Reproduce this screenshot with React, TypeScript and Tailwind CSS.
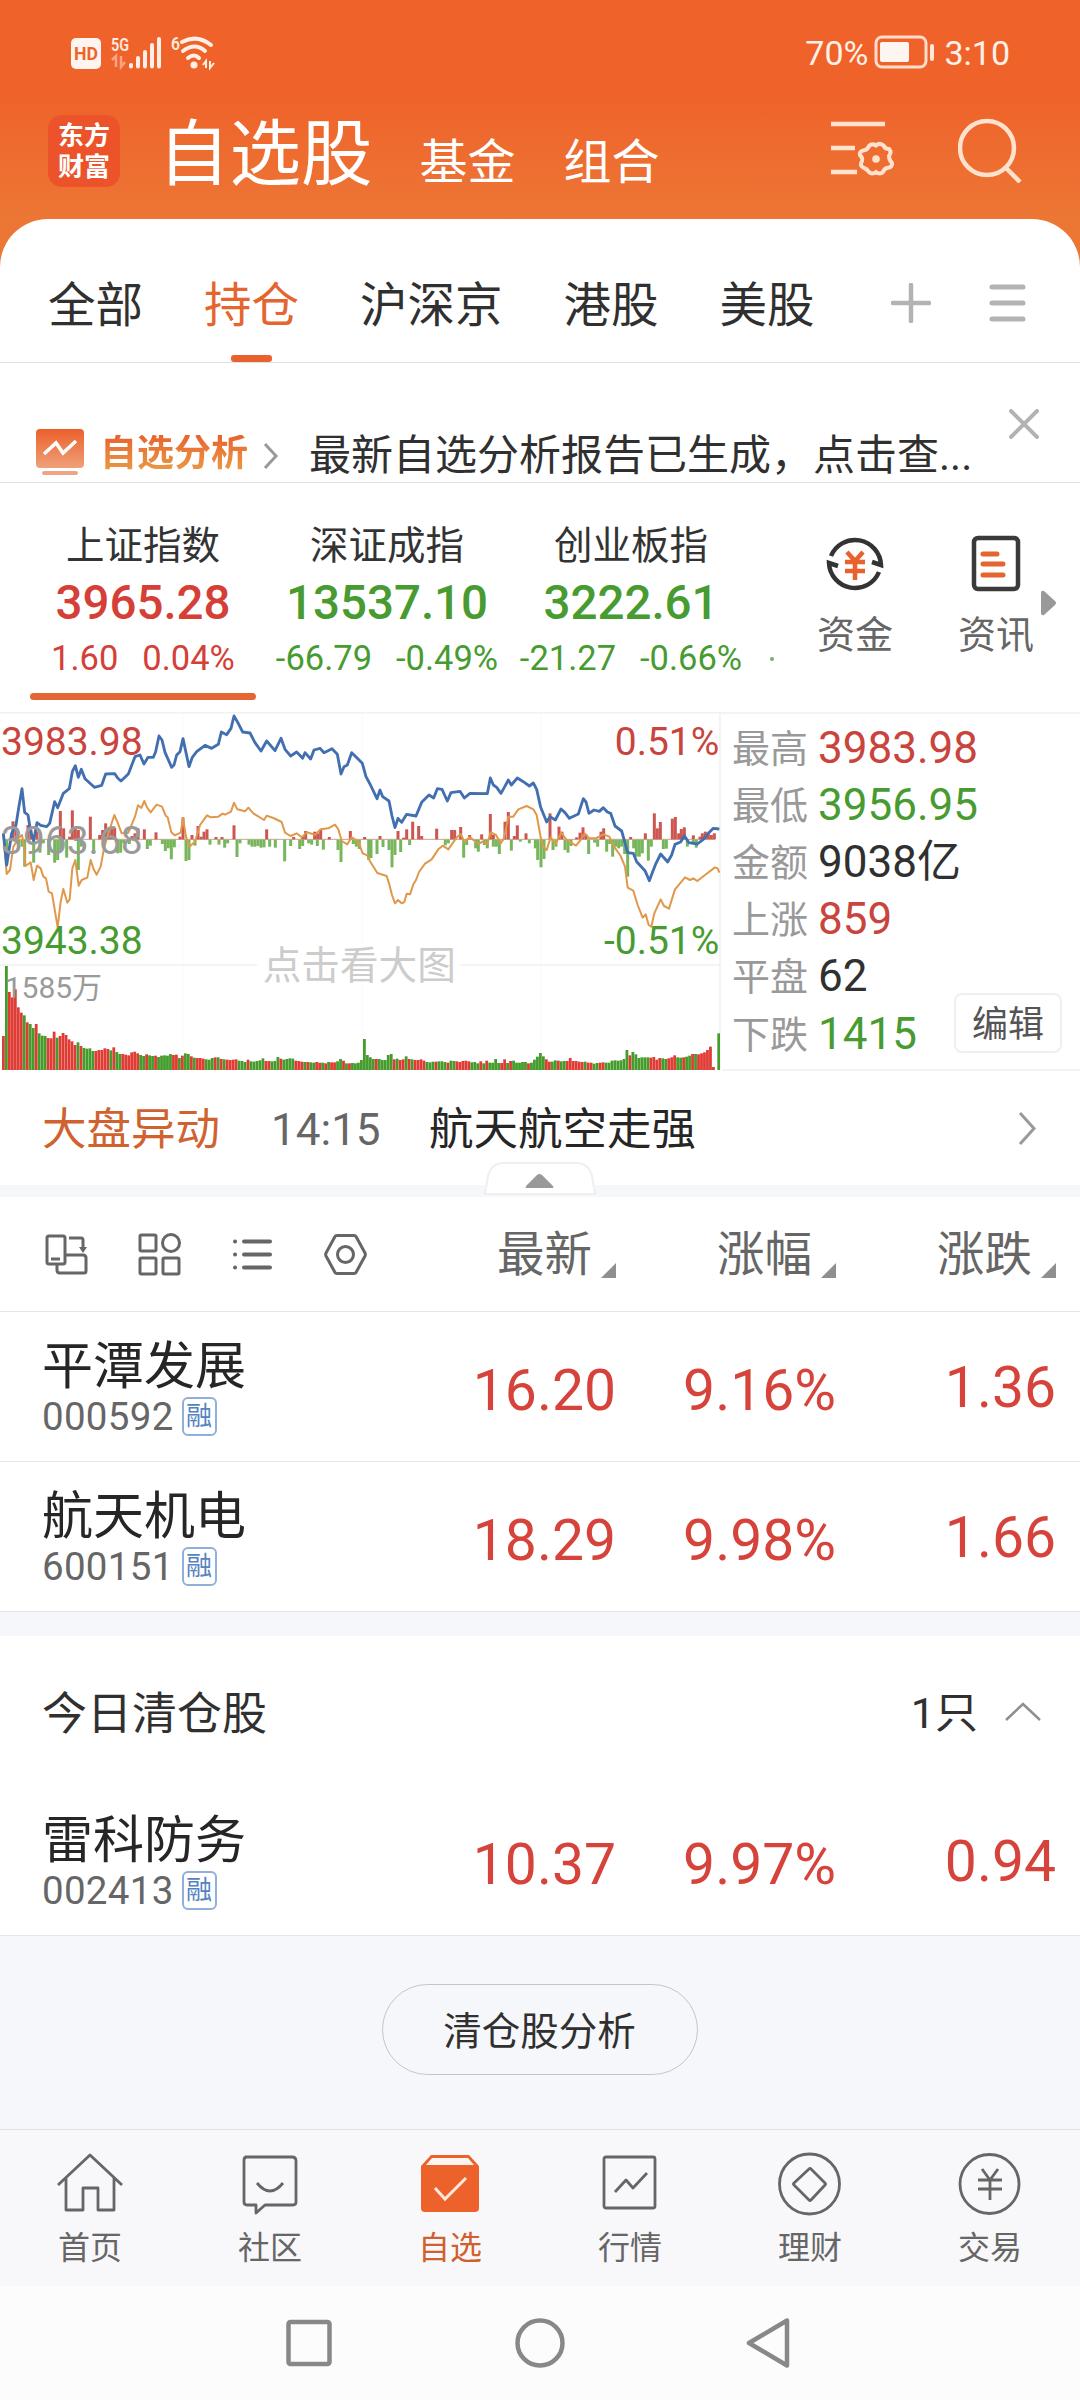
import React from 'react';

const GREEN = '#489b30';

// Chart coordinates use a 3x grid: 2160 x 1080 units for 720 x 360 px
const priceLine =
  '10,400 20,495 35,400 48,375 57,318 66,266 74,337 84,345 92,395 101,422 111,368 122,376 140,380 149,370 164,305 173,323 190,280 208,266 217,215 226,197 235,232 244,208 255,236 270,250 283,262 305,256 317,222 344,221 353,234 363,243 385,222 405,170 420,165 432,192 444,172 460,172 467,155 477,108 486,120 495,157 515,202 522,195 530,165 540,155 549,116 567,200 577,172 590,155 615,136 635,145 655,133 664,96 680,104 693,85 702,48 712,65 728,96 750,99 765,128 783,153 800,123 825,152 843,115 855,148 872,168 890,156 908,175 915,158 932,177 942,150 960,145 972,158 996,146 1012,163 1023,222 1032,200 1042,195 1055,158 1072,175 1087,190 1098,230 1110,252 1131,296 1140,270 1148,290 1167,303 1176,348 1185,383 1194,355 1205,367 1220,343 1248,348 1265,307 1287,285 1301,294 1312,266 1326,268 1342,303 1353,278 1380,274 1393,294 1410,280 1462,281 1471,234 1480,255 1490,262 1503,280 1513,262 1525,240 1534,255 1552,234 1570,245 1588,258 1600,249 1610,268 1622,322 1640,366 1650,350 1666,360 1683,327 1695,338 1708,355 1735,342 1750,296 1758,306 1767,340 1782,330 1798,334 1810,323 1822,336 1832,340 1845,378 1865,393 1878,440 1883,458 1900,460 1910,485 1935,512 1948,542 1958,515 1968,490 1982,462 2003,486 2015,465 2025,433 2042,426 2053,407 2067,428 2092,432 2110,418 2125,400 2140,385 2158,387';

const avgLine =
  '10,400 20,522 30,510 40,440 55,415 66,405 72,440 76,498 92,487 101,540 111,497 122,505 130,530 138,535 146,575 156,580 173,682 182,605 190,567 202,608 209,598 217,505 226,480 236,557 245,540 262,533 272,480 281,508 290,524 302,500 312,445 325,400 343,345 353,368 365,400 385,398 405,350 414,316 424,324 433,303 441,322 452,337 470,314 486,320 497,347 503,352 514,397 524,406 542,398 549,355 558,410 568,440 585,425 600,375 621,346 632,352 655,350 668,341 675,344 693,335 702,308 712,328 735,334 745,323 760,340 792,360 800,347 820,354 845,366 855,398 872,408 890,400 905,412 920,397 945,404 962,388 985,385 1005,374 1015,388 1025,423 1042,433 1055,412 1075,425 1088,460 1102,466 1110,484 1132,519 1160,528 1167,550 1176,585 1185,610 1194,600 1205,610 1213,606 1220,581 1230,583 1240,553 1248,540 1257,516 1275,491 1295,478 1315,448 1328,437 1345,448 1368,415 1382,402 1393,424 1410,412 1435,432 1448,425 1462,432 1472,397 1488,405 1502,430 1512,415 1525,350 1540,350 1555,328 1580,318 1600,328 1610,345 1622,412 1630,440 1640,450 1652,412 1666,432 1684,398 1700,420 1728,437 1742,420 1754,400 1768,415 1790,414 1810,403 1828,410 1842,440 1862,468 1875,500 1883,563 1900,572 1913,615 1928,653 1937,643 1946,675 1954,680 1963,640 1982,598 1992,618 2007,626 2025,568 2040,550 2055,532 2070,540 2080,535 2092,543 2115,525 2145,502 2153,505 2158,518';

const upBars =
  '39,364 48,385 84,375 93,390 111,395 181,333 191,385 209,410 217,331 226,380 235,390 271,350 299,405 308,390 317,370 326,385 335,385 344,383 396,408 405,400 414,385 433,388 468,397 540,410 549,352 576,405 594,378 603,410 612,395 621,388 648,411 666,411 702,376 800,388 881,411 908,410 917,393 944,395 953,400 962,390 988,411 1051,393 1094,411 1140,408 1194,393 1211,413 1220,388 1238,365 1256,378 1265,408 1310,386 1355,390 1364,390 1382,381 1409,405 1445,403 1471,342 1480,405 1515,365 1525,336 1543,408 1552,376 1578,400 1650,340 1677,380 1686,395 1730,412 1740,398 1749,382 1758,403 1803,395 1811,385 1892,411 1936,400 1963,340 1972,385 1981,366 2017,356 2026,351 2036,400 2044,387 2053,382 2080,406 2100,410 2107,400 2116,395 2125,400 2134,405 2143,400';

const downBars =
  '20,490 57,430 66,440 74,500 101,488 120,458 130,430 146,465 164,488 173,480 182,450 200,473 235,510 244,440 281,458 353,460 362,458 371,430 388,432 442,447 451,437 487,432 496,453 505,445 514,478 523,442 558,483 567,480 585,437 630,434 657,434 674,443 683,430 711,471 720,430 747,434 756,440 765,440 774,438 783,443 792,442 809,440 826,443 854,484 872,438 899,447 908,438 926,430 935,434 952,438 970,449 1014,450 1023,486 1060,432 1069,440 1078,447 1106,480 1113,474 1131,462 1149,441 1167,450 1176,502 1185,465 1202,456 1229,435 1336,436 1345,430 1391,473 1400,435 1427,445 1435,455 1453,435 1462,445 1480,440 1489,440 1498,462 1534,452 1561,425 1588,430 1606,445 1613,480 1623,502 1632,477 1659,450 1668,440 1695,450 1704,458 1713,438 1766,462 1784,428 1793,440 1820,455 1829,432 1838,470 1847,440 1856,445 1865,440 1874,462 1883,530 1901,445 1909,470 1918,470 1927,460 1945,482 1954,440 1990,447 1999,446 2062,440 2080,430 2089,443';

// One entry per bar: height + direction
const volumes =
  '102r 312g 234r 218r 242r 188r 172r 164g 143r 138g 126g 138r 110g 103g 102g 96r 95r 115r 97g 102r 111r 105r 92r 86r 75r 83g 72r 66g 64g 65g 57g 57r 60r 60r 65r 63r 59g 68r 54g 48g 48r 46r 44r 53r 55r 50r 45g 42g 47r 44g 42g 43r 39g 43g 44g 43g 48g 45r 46r 36g 43r 50g 48g 41r 37g 36r 36r 34r 32g 31g 36g 38r 38g 33r 32g 31r 30r 31r 32r 28g 27g 24g 31r 26g 25g 27g 29g 35g 27r 27r 26g 27g 39g 34r 31g 33g 35g 34g 28r 27r 25r 24g 24r 23g 22g 24r 22r 22g 20r 24g 23r 23r 26g 33g 28r 20g 20r 21g 20g 22g 30g 93g 45g 38g 33g 33r 33g 30g 30g 45g 48g 32r 34g 30r 32r 41g 33r 32g 30r 30r 32r 28r 24g 23g 25g 25r 26g 26g 24g 22r 28g 27g 26r 24r 27r 28r 26r 23g 24g 20g 26r 20g 28r 22g 22g 33g 21g 21r 32r 21g 27r 28g 22g 22g 24g 24g 20r 22g 31g 40g 51g 41g 32r 25r 25g 29g 28r 26g 27g 27r 36r 27r 27r 25r 24r 25g 22r 22r 19g 21g 22r 23r 22g 22g 28g 29g 28g 29g 33g 60g 44r 54g 47g 36g 38g 38g 38g 37r 39r 31r 36r 35g 33g 35r 38r 44r 38g 37g 38r 40g 43g 48r 48g 47r 50r 53r 60r 70r 9r';

function bars(data: string) {
  return data.split(' ').map((p) => p.split(',').map(Number));
}

function Header() {
  return (
    <header className="h-[280px] bg-linear-to-b from-[#ef632b] from-35% to-[#ec7735] to-80% text-white">
      {/* Status bar */}
      <div className="h-[104px] flex items-center justify-between pl-[71px] pr-[70px]">
        <svg width="145" height="44" viewBox="0 -5 145 44" fill="none" className="overflow-visible">
          <rect x="0" y="3" width="30" height="31" rx="5" fill="#fff5f0" />
          <text x="3" y="25" fontSize="19" fontWeight="700" fill="#ef632b" textLength="24" lengthAdjust="spacingAndGlyphs" className="font-['Roboto']">HD</text>
          <text x="40" y="16" fontSize="19" fontWeight="600" fill="#ffe9df" textLength="18" lengthAdjust="spacingAndGlyphs" className="font-['Roboto']">5G</text>
          <path d="M41 25l4-4v11M50 21v11l4-5" stroke="#f9a584" strokeWidth="2.5" />
          <path d="M60 30v1.500M67 23v8.500M74 17v14.500M81 10v21.500M88 4v27.500" stroke="#ffefe7" strokeWidth="4" strokeLinecap="round" />
          <text x="100" y="15" fontSize="19" fontWeight="600" fill="#ffe9df" textLength="9" lengthAdjust="spacingAndGlyphs" className="font-['Roboto']">6</text>
          <path d="M111 7q15-8 29 3M112 16q12-9 22 0M117 23q6-5 11 0" stroke="#ffefe7" strokeWidth="4" strokeLinecap="round" />
          <circle cx="123" cy="30" r="3.5" fill="#ffefe7" />
          <path d="M132 30l3-4v7M139 26v7l4-5" stroke="#ffefe7" strokeWidth="2" />
        </svg>
        <div className="flex items-center text-[34px] leading-none text-[#fff0e8]">
          <span className="mt-[2px]">70%</span>
          <svg className="ml-[6px] mr-[8px]" width="62" height="34" viewBox="0 0 62 34" fill="none">
            <rect x="2" y="2" width="50" height="30" rx="6" stroke="#ffdccc" strokeWidth="3" />
            <rect x="6" y="7" width="29" height="20" rx="2" fill="#fff5f0" />
            <path d="M58 11v13" stroke="#ffe9df" strokeWidth="4" strokeLinecap="round" />
          </svg>
          <span className="mt-[2px]">3:10</span>
        </div>
      </div>

      {/* Title bar */}
      <div className="h-[115px] flex items-center pl-12 pr-[58px]">
        <div className="w-[72px] h-[72px] mt-[-21px] pt-[2px] rounded-[14px] bg-[#ec532a] flex flex-col items-center justify-center text-[26px] leading-[31px] font-bold">
          <span>东方</span>
          <span>财富</span>
        </div>
        <div className="ml-[38px] mt-[-13px] flex items-baseline leading-none">
          <h1 className="text-[71.500px]">自选股</h1>
          <span className="ml-[47px] text-[48px]">基金</span>
          <span className="ml-[48px] text-[48px]">组合</span>
        </div>
        <svg className="ml-auto mt-[-25px]" width="64" height="60" viewBox="0 0 64 60" fill="none" stroke="#ffe2cd" strokeWidth="4.5">
          <path d="M0 5h54M0 29h24M0 53h26" />
          <path d="M45 26.500Q49 23 53 27Q54 30 58 30Q61 33 58 37Q58 41 61 44Q62 48 56 49Q53 50 52 53Q49 56 45 53Q41 56 38 53Q36 50 33 49Q28 47 31 42Q32 39 29 36Q28 32 34 31Q37 30 38 27Q41 24 45 26.500Z" strokeWidth="4" />
          <circle cx="45" cy="40" r="3.800" fill="#ffe2cd" stroke="none" />
        </svg>
        <svg className="ml-[63px] mt-[-23px]" width="64" height="66" viewBox="0 0 64 66" fill="none" stroke="#ffe2cd" strokeWidth="4.500">
          <circle cx="29" cy="31" r="27" />
          <path d="M47 50l15 15" />
        </svg>
      </div>
    </header>
  );
}

function MarketTabs() {
  return (
    <div className="h-[144px] border-b border-[#e0e0e0] flex items-center pl-12 pr-[54px]">
      <div className="flex gap-[61px] text-[47.500px] leading-none text-[#303030] pt-[32px]">
        <span>全部</span>
        <div className="relative text-[#e5652f]">
          持仓
          <div className="absolute left-[27px] top-[72px] w-[41px] h-[7px] rounded-[3px] bg-[#e9622d]" />
        </div>
        <span>沪深京</span>
        <span>港股</span>
        <span>美股</span>
      </div>
      <svg className="ml-auto mt-[24px]" width="40" height="40" viewBox="0 0 40 40" stroke="#b3b3b3" strokeWidth="4.500" strokeLinecap="round">
        <path d="M2 20h36M20 2v36" />
      </svg>
      <svg className="ml-[58px] mt-[24px]" width="37" height="40" viewBox="0 0 37 40" stroke="#b3b3b3" strokeWidth="5" strokeLinecap="round">
        <path d="M3 4h31M3 20h31M3 36h31" />
      </svg>
    </div>
  );
}

function AnalysisNotice() {
  return (
    <div className="h-[120px] border-b border-[#e0e0e0] flex items-center pl-9 pr-[41px] leading-none">
      <svg className="mt-[60px]" width="48" height="47" viewBox="0 0 48 47" fill="none">
        <defs>
          <linearGradient id="noticeFill" x1="0" y1="0" x2="0" y2="1">
            <stop offset="0" stopColor="#eb602b" />
            <stop offset="1" stopColor="#f0a07a" />
          </linearGradient>
        </defs>
        <rect width="48" height="39" rx="4" fill="url(#noticeFill)" />
        <path d="M8 25L20 14L27 24L40 12" stroke="#fff" strokeWidth="3.500" />
        <path d="M8 44h32" stroke="#efa483" strokeWidth="4" strokeLinecap="round" />
      </svg>
      <span className="ml-[16px] mt-[62px] text-[37px] font-bold bg-linear-to-b from-[#e8622d] to-[#e99a45] bg-clip-text text-transparent">自选分析</span>
      <svg className="ml-[15px] mt-[66px]" width="16" height="28" viewBox="0 0 16 28" fill="none" stroke="#999" strokeWidth="3">
        <path d="M2 2l11 12L2 26" />
      </svg>
      <span className="ml-[30px] mt-[67px] text-[42px] text-[#303030] whitespace-nowrap">最新自选分析报告已生成，点击查...</span>
      <svg className="ml-auto mt-[3px]" width="30" height="30" viewBox="0 0 30 30" stroke="#b3b3b3" strokeWidth="4" strokeLinecap="round">
        <path d="M2 2l26 26M28 2L2 28" />
      </svg>
    </div>
  );
}

const indices = [
  { name: '上证指数', value: '3965.28', diff: '1.60', pct: '0.04%', color: 'text-[#d43f38]', active: true },
  { name: '深证成指', value: '13537.10', diff: '-66.79', pct: '-0.49%', color: 'text-[#489b30]', active: false },
  { name: '创业板指', value: '3222.61', diff: '-21.27', pct: '-0.66%', color: 'text-[#489b30]', active: false },
];

function IndexStrip() {
  return (
    <div className="h-[229px] flex leading-none">
      <div className="flex pl-[21px]">
        {indices.map((item) => (
          <div key={item.name} className="w-[244px] h-[217px] flex flex-col items-center pt-[44px]">
            <span className="text-[38.500px] text-[#333]">{item.name}</span>
            <span className={`mt-[14px] text-[47.500px] font-medium ${item.color}`}>{item.value}</span>
            <div className={`mt-[14px] flex gap-[24px] text-[34.500px] ${item.color}`}>
              <span>{item.diff}</span>
              <span>{item.pct}</span>
            </div>
            {item.active && <div className="mt-auto w-[226px] h-[7px] rounded-full bg-[#e56633]" />}
          </div>
        ))}
      </div>
      <div className="w-[4px] h-[4px] ml-[17px] mt-[174px] rounded-full bg-[#71b35f]" />
      <div className="ml-[43px] w-[76px] flex flex-col items-center">
        <svg className="mt-[50px]" width="60" height="62" viewBox="0 0 60 62" fill="none">
          <path d="M6 23A26 26 0 0 1 56 32L47 29M54 39A26 26 0 0 1 4 30L13 33" stroke="#333" strokeWidth="4.500" />
          <path d="M22 19l8 9 8-9M20 29h20M20 38h20M30 28v19" stroke="#e9622d" strokeWidth="4.500" />
        </svg>
        <span className="mt-[21px] text-[38px] text-[#666]">资金</span>
      </div>
      <div className="ml-[65px] w-[76px] flex flex-col items-center">
        <svg className="mt-[50px]" width="50" height="62" viewBox="0 0 50 62" fill="none">
          <rect x="3" y="5" width="44" height="51" rx="4" stroke="#3a3a3a" strokeWidth="4.500" />
          <path d="M12 21h14M12 31h20M12 42h20" stroke="#e5652f" strokeWidth="5" strokeLinecap="round" />
        </svg>
        <span className="mt-[21px] text-[38px] text-[#666]">资讯</span>
      </div>
      <svg className="mt-[107px] ml-[6px]" width="17" height="26" viewBox="0 0 17 26" fill="#999">
        <path d="M1 3q0-3 3-2l11 10q2 2 0 4L4 25q-3 1-3-2z" />
      </svg>
    </div>
  );
}

function TrendChart() {
  return (
    <svg width="722" height="360" viewBox="0 36 2166 1080" fill="none" className="block shrink-0 font-['Roboto','Noto_Sans_CJK_SC',sans-serif]">
      <path d="M0 38H2166M0 795H772M1380 795H2160M2160 37V1110" stroke="#f1f1f1" strokeWidth="5" />
      <path d="M549 42V1108M1086 42V1108M1623 42V1108" stroke="#efefef" strokeWidth="3" strokeDasharray="4 8" />
      <path d="M10 418H2145" stroke="#c9a58c" strokeWidth="3" />
      {bars(upBars).map(([x, y]) => (
        <rect key={x} x={x - 4.5} y={y} width="9" height={418 - y} fill="#cd5650" />
      ))}
      {bars(downBars).map(([x, y]) => (
        <rect key={x} x={x - 4.5} y={419} width="9" height={y - 419} fill="#78b65c" />
      ))}
      {volumes.split(' ').map((v, i) => {
        const h = parseInt(v, 10);
        return (
          <rect key={i} x={6 + i * 8.95} y={1110 - h} width="8.4" height={h} fill={v.endsWith('r') ? '#e03c36' : '#459c2d'} />
        );
      })}
      <rect x="2152" y="1000" width="8" height="110" fill="#459c2d" />
      <polyline points={avgLine} stroke="#e0984a" strokeWidth="6" strokeLinejoin="round" />
      <polyline points={priceLine} stroke="#426fb0" strokeWidth="8.5" strokeLinejoin="round" />
      <text x="3" y="164" fontSize="117" fill="#c8443d" textLength="425">3983.98</text>
      <text x="3" y="462" fontSize="117" fill="#9a9a9a" textLength="425">3963.68</text>
      <text x="3" y="761" fontSize="117" fill={GREEN} textLength="425">3943.38</text>
      <text x="2158" y="164" fontSize="117" fill="#c8443d" textAnchor="end">0.51%</text>
      <text x="2158" y="761" fontSize="117" fill={GREEN} textAnchor="end">-0.51%</text>
      <text x="14" y="893" fontSize="90" fill="#9a9a9a">1585万</text>
      <text x="788" y="838" fontSize="116" fill="#ccc">点击看大图</text>
    </svg>
  );
}

const stats = [
  { label: '最高', value: '3983.98', color: 'text-[#c8443d]' },
  { label: '最低', value: '3956.95', color: 'text-[#489b30]' },
  { label: '金额', value: '9038亿', color: 'text-[#303030]' },
  { label: '上涨', value: '859', color: 'text-[#c8443d]' },
  { label: '平盘', value: '62', color: 'text-[#303030]' },
  { label: '下跌', value: '1415', color: 'text-[#489b30]' },
];

function MarketOverview() {
  return (
    <div className="h-[359px] flex">
      <TrendChart />
      <div className="relative flex-1 h-[359px] border-y-2 border-[#f3f3f3] pt-[5px] pl-[10px] leading-none">
        {stats.map((s) => (
          <div key={s.label} className="h-[57.200px] flex items-center">
            <span className="w-[86px] pt-[2px] text-[38px] text-[#999]">{s.label}</span>
            <span className={`text-[44px] ${s.color}`}>{s.value}</span>
          </div>
        ))}
        <button className="absolute right-[18px] bottom-[16px] w-[108px] h-[60px] border-2 border-[#efefef] rounded-lg bg-white pt-[3px] text-[36px] text-[#555]">编辑</button>
      </div>
    </div>
  );
}

function MarketEvent() {
  return (
    <div className="relative h-[126px] border-b-[12px] border-[#f5f7fa] flex items-center pl-[42px] pr-[43px] text-[44.500px] leading-none">
      <span className="mt-[5px] text-[#d0622f]">大盘异动</span>
      <span className="mt-[3px] ml-[51px] w-[158px] text-[44px] text-[#666]">14:15</span>
      <span className="mt-[5px] text-[#262626]">航天航空走强</span>
      <svg className="ml-auto" width="19" height="33" viewBox="0 0 19 33" fill="none" stroke="#999" strokeWidth="3">
        <path d="M2 1l14 15.500L2 32" />
      </svg>
      <svg className="absolute left-[484px] top-[91px]" width="112" height="34" viewBox="0 0 112 34">
        <path d="M1 32L4 14Q7 2 18 1H94Q105 2 108 14L111 32Z" fill="#fff" stroke="#efefef" strokeWidth="2" />
        <path d="M42 24L53 13q2.500-2 5 0L69 24q1 2-1 2H43q-2 0-1-2z" fill="#999" />
      </svg>
    </div>
  );
}

const columns = ['最新', '涨幅', '涨跌'];

function ListToolbar() {
  return (
    <div className="h-[115px] border-b border-[#e6e6e6] flex items-center pl-[45px] pr-6 leading-none">
      <div className="flex gap-[50px]">
        <svg width="43" height="43" viewBox="0 0 43 43" fill="none" stroke="#666" strokeWidth="3">
          <rect x="2" y="3" width="18" height="28" rx="2" />
          <path d="M6 26h9M24 5h12q2 0 2 2v10" />
          <path d="M34 14h8l-4 6z" fill="#666" stroke="none" />
          <path d="M12 31v6q0 3 3 3h24q2 0 2-2V25q0-3-3-3H20" />
        </svg>
        <svg width="43" height="43" viewBox="0 0 43 43" fill="none" stroke="#666" strokeWidth="3">
          <rect x="2" y="2" width="16" height="16" rx="1.500" />
          <circle cx="33" cy="10" r="8.500" />
          <rect x="2" y="25" width="16" height="16" rx="1.500" />
          <rect x="25" y="25" width="16" height="16" rx="1.500" />
        </svg>
        <svg width="43" height="43" viewBox="0 0 43 43" stroke="#666" strokeWidth="4" strokeLinecap="round">
          <path d="M4 8.500h.1M4 21.500h.1M4 34.500h.1M13 8.500h26M13 21.500h26M13 34.500h26" />
        </svg>
        <svg width="43" height="43" viewBox="0 0 43 43" fill="none" stroke="#666" strokeWidth="3" strokeLinejoin="round">
          <path d="M13 2.500h17q1.500 0 2 1L41 20q.7 1.500 0 3L32 39.500q-.5 1-2 1H13q-1.500 0-2-1L2 23q-.7-1.500 0-3l9-16.500q.5-1 2-1z" />
          <circle cx="21.500" cy="21.500" r="8" />
        </svg>
      </div>
      <div className="ml-auto mt-[4px] flex">
        {columns.map((c) => (
          <div key={c} className="w-[220px] flex justify-end items-end text-[47.500px] text-[#666]">
            {c}
            <svg className="ml-[9px] mb-[2px]" width="15" height="15" viewBox="0 0 15 15" fill="#8f8f8f">
              <path d="M15 0v15H0z" />
            </svg>
          </div>
        ))}
      </div>
    </div>
  );
}

interface Stock {
  name: string;
  code: string;
  price: string;
  pct: string;
  diff: string;
}

function StockRow({ stock }: { stock: Stock }) {
  return (
    <div className="h-[150px] border-b border-[#e6e6e6] flex pl-[42px] pr-6 leading-none">
      <div className="flex-1 pt-[29px]">
        <div className="text-[51px] text-[#262626]">{stock.name}</div>
        <div className="flex items-center mt-[4px]">
          <span className="text-[38.500px] mt-[2px] tracking-[0.3px] text-[#666]">{stock.code}</span>
          <span className="ml-[8px] w-[35px] h-[39px] border-2 border-[#8fb0da] rounded-[6px] flex items-center justify-center text-[26px] text-[#5583c0]">融</span>
        </div>
      </div>
      <div className="flex text-right text-[57px] text-[#d5433b] pt-[50px]">
        <span className="w-[220px]">{stock.price}</span>
        <span className="w-[220px]">{stock.pct}</span>
        <span className="w-[220px] mt-[-3px]">{stock.diff}</span>
      </div>
    </div>
  );
}

const holdings: Stock[] = [
  { name: '平潭发展', code: '000592', price: '16.20', pct: '9.16%', diff: '1.36' },
  { name: '航天机电', code: '600151', price: '18.29', pct: '9.98%', diff: '1.66' },
];

const cleared: Stock = { name: '雷科防务', code: '002413', price: '10.37', pct: '9.97%', diff: '0.94' };

function ClearedSection() {
  return (
    <>
      <div className="h-6 bg-[#f5f7fa]" />
      <div className="h-[150px] flex items-center pl-[42px] pr-[39px] text-[45px] leading-none text-[#303030]">
        <span className="mt-[7px]">今日清仓股</span>
        <span className="ml-auto mt-[5px] text-[43px]">1只</span>
        <svg className="ml-[27px]" width="36" height="19" viewBox="0 0 36 19" fill="none" stroke="#8f8f8f" strokeWidth="2.500">
          <path d="M1 18L18 2l17 16" />
        </svg>
      </div>
      <StockRow stock={cleared} />
      <div className="h-[193px] bg-[#f6f7fa] flex justify-center pt-[48px]">
        <button className="w-[316px] h-[91px] mr-[1px] rounded-full border-[1.500px] border-[#c4c5c8] pt-[5px] text-[38.500px] leading-none text-[#303030]">清仓股分析</button>
      </div>
    </>
  );
}

function NavItem({ label, active, children }: { label: string; active?: boolean; children: React.ReactNode }) {
  return (
    <div className="w-[180px] flex flex-col items-center pt-[20px]">
      <svg width="70" height="70" viewBox="0 0 70 70" fill="none" stroke="#666" strokeWidth="2.800" strokeLinejoin="round">
        {children}
      </svg>
      <span className={`mt-[12px] text-[32px] leading-none ${active ? 'text-[#d0602f]' : 'text-[#666]'}`}>{label}</span>
    </div>
  );
}

function BottomNav() {
  return (
    <nav className="h-[157px] bg-[#f8f8fa] border-t border-[#e0e1e4] flex">
      <NavItem label="首页">
        <path d="M3 35L35 5l32 30M11 28v32h17V38h15v22h16V28" />
      </NavItem>
      <NavItem label="社区">
        <path d="M10 7h47q4 0 4 4v41q0 3-3 3H30l-9 8v-8h-9q-3 0-3-3V10q0-3 3-3" />
        <path d="M22 33q13 16 26 0" />
      </NavItem>
      <NavItem label="自选" active>
        <path d="M6 16L16 5h38l10 11v42q0 4-4 4H10q-4 0-4-4z" fill="#ed622a" stroke="none" />
        <path d="M11 15l6-7h36l6 7z" fill="#faf4f2" stroke="none" />
        <path d="M20 38l10 11 21-21" stroke="#ffe9df" strokeWidth="3" strokeLinejoin="miter" />
      </NavItem>
      <NavItem label="行情">
        <rect x="9" y="7" width="51" height="51" rx="2" />
        <path d="M20 42l11-12 7 8 14-15" />
      </NavItem>
      <NavItem label="理财">
        <circle cx="34.500" cy="34" r="30" />
        <path d="M34 19q1-1 2 0l14 14q1 1 0 2L36 50q-1 1-2 0L19 35q-1-1 0-2z" />
      </NavItem>
      <NavItem label="交易">
        <circle cx="34.500" cy="34" r="29.500" />
        <path d="M27 19l8 11 8-11M23 30h24M23 39h24M35 30v20" />
      </NavItem>
    </nav>
  );
}

function SystemNav() {
  return (
    <div className="h-[114px] bg-[#fcfcfc] flex items-center pl-[286px]">
      <svg width="46" height="50" viewBox="0 0 46 50" fill="none" stroke="#888" strokeWidth="4.500">
        <rect x="2.500" y="4" width="41" height="42" rx="2" />
      </svg>
      <svg className="ml-[183px]" width="50" height="50" viewBox="0 0 50 50" fill="none" stroke="#888" strokeWidth="4.500">
        <circle cx="25" cy="25" r="22.500" />
      </svg>
      <svg className="ml-[180px]" width="46" height="50" viewBox="0 0 46 50" fill="none" stroke="#888" strokeWidth="4.500" strokeLinejoin="round">
        <path d="M42 2.500v45L4 25z" />
      </svg>
    </div>
  );
}

export default function App() {
  return (
    <div className="w-[1080px] h-[2400px] overflow-hidden bg-white font-['Roboto','Noto_Sans_CJK_SC',sans-serif]">
      <Header />
      <main className="relative mt-[-61px] rounded-t-[48px] bg-white">
        <MarketTabs />
        <AnalysisNotice />
        <IndexStrip />
        <MarketOverview />
        <MarketEvent />
        <ListToolbar />
        {holdings.map((s) => (
          <StockRow key={s.code} stock={s} />
        ))}
        <ClearedSection />
        <BottomNav />
        <SystemNav />
      </main>
    </div>
  );
}
